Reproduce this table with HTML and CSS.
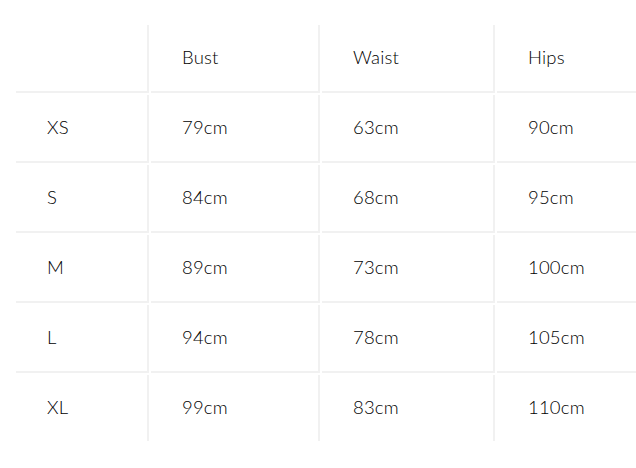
FILE: index.html
```html
<!DOCTYPE html>
<html>
<head>
<meta charset="utf-8">
<link rel="stylesheet" href="styles.css">
</head>
<body>
<div class="wrap">
<table class="size-table">
  <colgroup>
    <col class="c-size">
    <col class="c-bust">
    <col class="c-waist">
    <col class="c-hips">
  </colgroup>
  <thead>
    <tr><th></th><th>Bust</th><th>Waist</th><th>Hips</th></tr>
  </thead>
  <tbody>
    <tr><td>XS</td><td>79cm</td><td>63cm</td><td>90cm</td></tr>
    <tr><td>S</td><td>84cm</td><td>68cm</td><td>95cm</td></tr>
    <tr><td>M</td><td>89cm</td><td>73cm</td><td>100cm</td></tr>
    <tr><td>L</td><td>94cm</td><td>78cm</td><td>105cm</td></tr>
    <tr><td>XL</td><td>99cm</td><td>83cm</td><td>110cm</td></tr>
  </tbody>
</table>
</div>
</body>
</html>
```
FILE: styles.css
```css
html, body {
  margin: 0;
  padding: 0;
  background: #fff;
  overflow: hidden;
}
body {
  padding: 23px 0 0 14px;
  font-family: Lato, "Open Sans", sans-serif;
  color: #000;
}
.wrap {
  width: 622px;
  overflow: hidden;
}
.size-table {
  border-collapse: separate;
  border-spacing: 2px;
  table-layout: fixed;
  width: 660px;
}
.c-size { width: 133px; }
.c-bust { width: 169px; }
.c-waist { width: 173px; }
.c-hips { width: 175px; }
.size-table th,
.size-table td {
  box-sizing: border-box;
  height: 68px;
  padding: 0 0 3px 31px;
  text-align: left;
  vertical-align: middle;
  font-size: 18.5px;
  font-weight: 300;
  letter-spacing: 0.2px;
  border-right: 2px solid #f1f1f1;
  border-bottom: 2px solid #f1f1f1;
}
.size-table th:last-child,
.size-table td:last-child {
  border-right: none;
}
.size-table tbody tr:last-child td {
  border-bottom: none;
  height: 66px;
}
```
